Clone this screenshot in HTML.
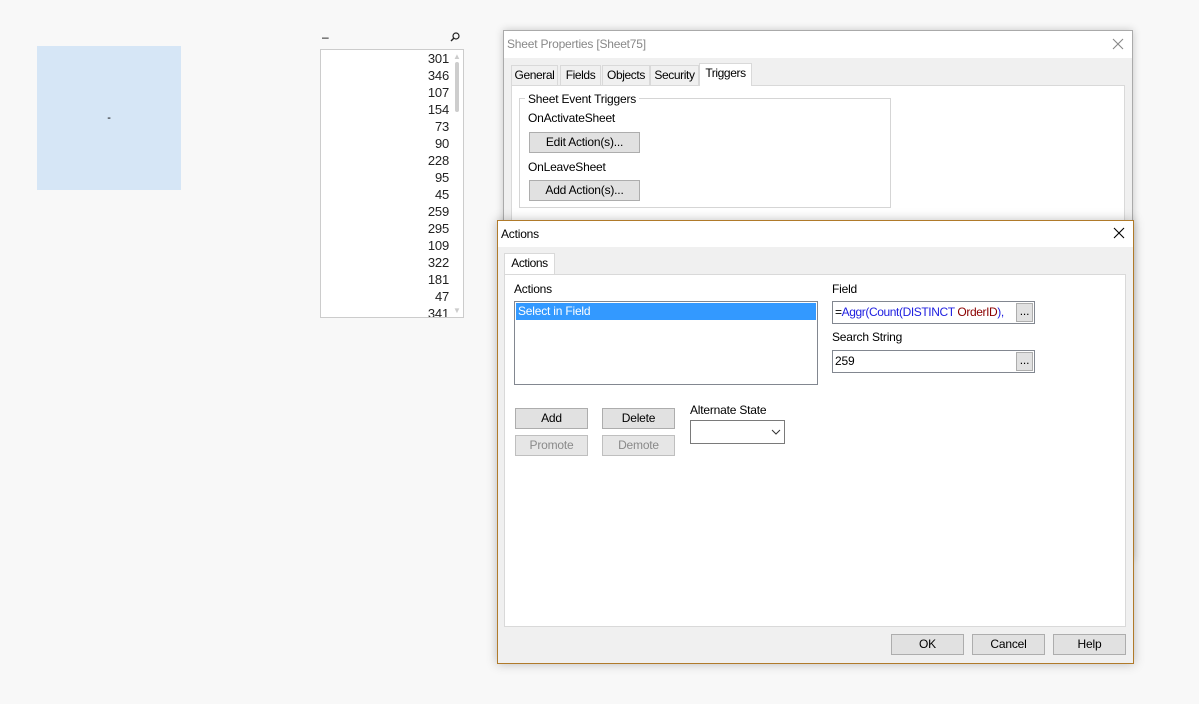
<!DOCTYPE html>
<html><head><style>
*{box-sizing:border-box;margin:0;padding:0}
body{width:1199px;height:704px;background:#f8f8f8;font-family:"Liberation Sans",sans-serif;font-size:12px;color:#000;position:relative;overflow:hidden;letter-spacing:-0.2px}
.a{position:absolute}
.btn{position:absolute;background:#e1e1e1;border:1px solid #adadad;text-align:center;line-height:19px;font-size:12px}
.dis{color:#8a8a8a;background:#e6e6e6;border-color:#bfbfbf}
.tab{position:absolute;top:65px;height:20px;border:1px solid #d9d9d9;border-bottom:none;background:#f0f0f0;line-height:18px;text-align:center;font-size:12px;letter-spacing:-0.4px}
.num{position:absolute;right:14px;font-size:13px;color:#222}
</style></head><body>
<div class="a" style="left:37px;top:46px;width:144px;height:144px;background:#d6e6f6;text-align:center;line-height:144px;font-size:11px">-</div>

<div class="a" style="left:322px;top:30px;font-size:12px">–</div>
<svg class="a" style="left:450px;top:32px" width="10" height="10"><circle cx="6" cy="4" r="3" fill="none" stroke="#222" stroke-width="1.2"/><line x1="4" y1="6" x2="1" y2="9" stroke="#222" stroke-width="1.4"/></svg>
<div class="a" style="left:320px;top:49px;width:144px;height:269px;background:#fff;border:1px solid #ccc;overflow:hidden">
<div class="a" style="left:134px;top:12px;width:4px;height:50px;background:#cdcdcd;border-radius:2px"></div>
<div class="a" style="left:132px;top:2px;font-size:8px;color:#ccc">▲</div>
<div class="a" style="left:132px;top:256px;font-size:8px;color:#ccc">▼</div>
<div class="num" style="top:1px">301</div><div class="num" style="top:18px">346</div><div class="num" style="top:35px">107</div><div class="num" style="top:52px">154</div><div class="num" style="top:69px">73</div><div class="num" style="top:86px">90</div><div class="num" style="top:103px">228</div><div class="num" style="top:120px">95</div><div class="num" style="top:137px">45</div><div class="num" style="top:154px">259</div><div class="num" style="top:171px">295</div><div class="num" style="top:188px">109</div><div class="num" style="top:205px">322</div><div class="num" style="top:222px">181</div><div class="num" style="top:239px">47</div><div class="num" style="top:256px">341</div>
</div>

<!-- Sheet properties -->
<div class="a" style="left:503px;top:30px;width:630px;height:530px;background:#f0f0f0;border:1px solid #aaa;box-shadow:0 0 8px rgba(0,0,0,.2)">
<div class="a" style="left:0;top:0;width:628px;height:27px;background:#fff;color:#888;padding:6px 3px;font-size:12px">Sheet Properties [Sheet75]</div>
<svg class="a" style="left:608px;top:7px" width="12" height="12"><path d="M1 1L11 11M11 1L1 11" stroke="#888" stroke-width="1.1"/></svg>
<div class="a" style="left:7px;top:54px;width:614px;height:480px;background:#fff;border:1px solid #d9d9d9"></div>
</div>
<div class="tab" style="left:511px;width:47px">General</div>
<div class="tab" style="left:560px;width:41px">Fields</div>
<div class="tab" style="left:602px;width:48px">Objects</div>
<div class="tab" style="left:650px;width:49px">Security</div>
<div class="tab" style="left:699px;top:63px;height:23px;width:53px;background:#fff">Triggers</div>
<div class="a" style="left:519px;top:98px;width:372px;height:110px;border:1px solid #d5d5d5"></div>
<div class="a" style="left:525px;top:92px;background:#fff;padding:0 3px">Sheet Event Triggers</div>
<div class="a" style="left:528px;top:111px">OnActivateSheet</div>
<div class="btn" style="left:529px;top:132px;width:111px;height:21px">Edit Action(s)...</div>
<div class="a" style="left:528px;top:160px">OnLeaveSheet</div>
<div class="btn" style="left:529px;top:180px;width:111px;height:21px">Add Action(s)...</div>

<!-- Actions dialog -->
<div class="a" style="left:497px;top:220px;width:637px;height:444px;background:#f0f0f0;border:1px solid #b07a2a;box-shadow:0 0 10px rgba(0,0,0,.25)">
<div class="a" style="left:0;top:0;width:635px;height:26px;background:#fff;padding:6px 3px">Actions</div>
<svg class="a" style="left:615px;top:6px" width="12" height="12"><path d="M1 1L11 11M11 1L1 11" stroke="#000" stroke-width="1.1"/></svg>
<div class="a" style="left:6px;top:53px;width:622px;height:353px;background:#fff;border:1px solid #d9d9d9"></div>
</div>
<div class="tab" style="left:504px;top:253px;height:21px;width:51px;background:#fff;line-height:19px">Actions</div>
<div class="a" style="left:514px;top:282px">Actions</div>
<div class="a" style="left:514px;top:301px;width:304px;height:84px;border:1px solid #828790;background:#fff">
<div class="a" style="left:1px;top:1px;width:300px;height:17px;background:#3399ff;color:#fff;padding:1px 2px">Select in Field</div></div>
<div class="a" style="left:832px;top:282px">Field</div>
<div class="a" style="left:832px;top:301px;width:203px;height:23px;border:1px solid #828790;background:#fff;padding:3px 2px;white-space:nowrap;overflow:hidden;letter-spacing:-0.4px">=<span style="color:#2020e0">Aggr(Count(DISTINCT </span><span style="color:#8b0000">OrderID</span><span style="color:#2020e0">),</span></div>
<div class="btn" style="left:1016px;top:303px;width:17px;height:19px;line-height:15px">...</div>
<div class="a" style="left:832px;top:330px">Search String</div>
<div class="a" style="left:832px;top:350px;width:203px;height:23px;border:1px solid #828790;background:#fff;padding:3px 2px">259</div>
<div class="btn" style="left:1016px;top:352px;width:17px;height:19px;line-height:15px">...</div>
<div class="btn" style="left:515px;top:408px;width:73px;height:21px">Add</div>
<div class="btn" style="left:602px;top:408px;width:73px;height:21px">Delete</div>
<div class="btn dis" style="left:515px;top:435px;width:73px;height:21px">Promote</div>
<div class="btn dis" style="left:602px;top:435px;width:73px;height:21px">Demote</div>
<div class="a" style="left:690px;top:403px">Alternate State</div>
<div class="a" style="left:690px;top:420px;width:95px;height:24px;border:1px solid #7a7a7a;background:#fff"><svg class="a" style="left:80px;top:8px" width="10" height="7"><path d="M1 1 L5 5 L9 1" fill="none" stroke="#333"/></svg></div>
<div class="btn" style="left:891px;top:634px;width:73px;height:21px">OK</div>
<div class="btn" style="left:972px;top:634px;width:73px;height:21px">Cancel</div>
<div class="btn" style="left:1053px;top:634px;width:73px;height:21px">Help</div>
</body></html>
